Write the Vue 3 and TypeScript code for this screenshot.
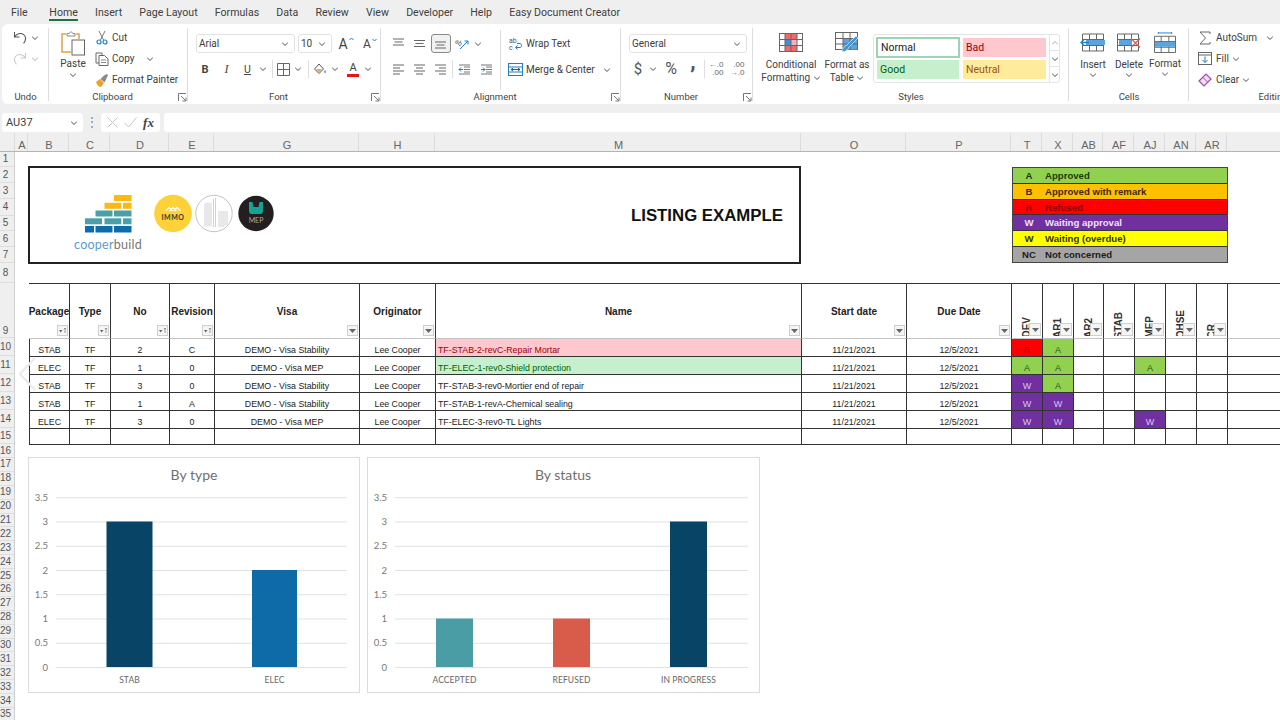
<script setup lang="ts">
interface Row { p: string; n: number; r: string; v: string; name: string; cls: string; s: string[] }

const tabs: string[] = ['Home', 'Insert', 'Page Layout', 'Formulas', 'Data', 'Review', 'View', 'Developer', 'Help', 'Easy Document Creator']
const columns: string[] = ['', 'A', 'B', 'C', 'D', 'E', 'G', 'H', 'M', 'O', 'P', 'T', 'X', 'AB', 'AF', 'AJ', 'AN', 'AR', '']

const rowHeads: { n: number; h: number }[] = [
  { n: 1, h: 15 }, { n: 2, h: 16 }, { n: 3, h: 16 }, { n: 4, h: 17 }, { n: 5, h: 15 }, { n: 6, h: 16 }, { n: 7, h: 16 }, { n: 8, h: 20 }, { n: 9, h: 55 },
  { n: 10, h: 18 }, { n: 11, h: 18 }, { n: 12, h: 18 }, { n: 13, h: 18 }, { n: 14, h: 18 }, { n: 15, h: 16 }, { n: 16, h: 14 },
  ...Array.from({ length: 19 }, (_, i) => ({ n: 17 + i, h: 13.9 }))
]

const legend = [
  { k: 'A', t: 'Approved', c: 'lg-a' },
  { k: 'B', t: 'Approved with remark', c: 'lg-b' },
  { k: 'R', t: 'Refused', c: 'lg-r' },
  { k: 'W', t: 'Waiting approval', c: 'lg-w' },
  { k: 'W', t: 'Waiting (overdue)', c: 'lg-y' },
  { k: 'NC', t: 'Not concerned', c: 'lg-n' }
]

const heads = [
  { t: 'Package', sort: true }, { t: 'Type', sort: true }, { t: 'No', sort: true }, { t: 'Revision', sort: true },
  { t: 'Visa', sort: false }, { t: 'Originator', sort: false }, { t: 'Name', sort: false }, { t: 'Start date', sort: false }, { t: 'Due Date', sort: false }
]
const statusHeads: string[] = ['DEV', 'AR1', 'AR2', 'STAB', 'MEP', 'OHSE', 'CR']

const rows: Row[] = [
  { p: 'STAB', n: 2, r: 'C', v: 'DEMO - Visa Stability', name: 'TF-STAB-2-revC-Repair Mortar', cls: 'bad', s: ['R', 'A', '', '', '', '', ''] },
  { p: 'ELEC', n: 1, r: '0', v: 'DEMO - Visa MEP', name: 'TF-ELEC-1-rev0-Shield protection', cls: 'good', s: ['A', 'A', '', '', 'A', '', ''] },
  { p: 'STAB', n: 3, r: '0', v: 'DEMO - Visa Stability', name: 'TF-STAB-3-rev0-Mortier end of repair', cls: '', s: ['W', 'A', '', '', '', '', ''] },
  { p: 'STAB', n: 1, r: 'A', v: 'DEMO - Visa Stability', name: 'TF-STAB-1-revA-Chemical sealing', cls: '', s: ['W', 'W', '', '', '', '', ''] },
  { p: 'ELEC', n: 3, r: '0', v: 'DEMO - Visa MEP', name: 'TF-ELEC-3-rev0-TL Lights', cls: '', s: ['W', 'W', '', '', 'W', '', ''] }
]

const ticks: number[] = [3.5, 3, 2.5, 2, 1.5, 1, 0.5, 0]
const yOf = (v: number): number => 209 - v * 48.5
const charts = [
  { title: 'By type', w: 330, h: 234, right: 319, tx: 166, bars: [
    { l: 'STAB', v: 3, x: 78.5, w: 46, c: '#084466' },
    { l: 'ELEC', v: 2, x: 224, w: 45, c: '#0e6ba8' }
  ] },
  { title: 'By status', w: 391, h: 234, right: 381, tx: 196, bars: [
    { l: 'ACCEPTED', v: 1, x: 69, w: 37, c: '#4a9da5' },
    { l: 'REFUSED', v: 1, x: 186, w: 37, c: '#d95c4b' },
    { l: 'IN PROGRESS', v: 3, x: 303, w: 37, c: '#084466' }
  ] }
]
</script>

<template>
  <div class="app">
    <svg class="defs" width="0" height="0" aria-hidden="true">
      <symbol id="chev" viewBox="0 0 8 8"><path d="M1.2 2.8 4 5.4l2.8-2.6" fill="none" stroke="#555" stroke-width="1" /></symbol>
      <symbol id="launch" viewBox="0 0 9 9"><path d="M.5 8V.5H8M3 3l4.5 4.5M4.5 8H8V4.5" fill="none" stroke="#666" stroke-width=".9" /></symbol>
    </svg>

    <nav class="tabs">
      <span class="tab file">File</span>
      <span v-for="t in tabs" :key="t" class="tab" :class="{ active: t === 'Home' }">{{ t }}</span>
    </nav>

    <section class="ribbon">
      <!-- Undo -->
      <div class="grp g-undo">
        <div class="body stack3">
          <div class="undo-row">
            <svg width="16" height="16" viewBox="0 0 16 16"><path d="M2.5 2v5h5M2.8 6.8C4.5 3.6 8.6 2.6 11.4 4.4c2.8 1.9 3 5.6.2 9" fill="none" stroke="#555" stroke-width="1.1" /></svg>
            <svg class="chev"><use href="#chev" /></svg>
          </div>
          <div class="undo-row faded">
            <svg width="16" height="16" viewBox="0 0 16 16"><path d="M13.5 2v5h-5M13.2 6.8C11.5 3.6 7.4 2.6 4.6 4.4c-2.8 1.9-3 5.6-.2 9" fill="none" stroke="#888" stroke-width="1.1" /></svg>
            <svg class="chev"><use href="#chev" /></svg>
          </div>
        </div>
        <div class="label">Undo</div>
      </div>

      <!-- Clipboard -->
      <div class="grp g-clip">
        <div class="body clip-body">
          <div class="paste">
            <svg width="26" height="27" viewBox="0 0 26 27">
              <path d="M6 4H2v18h9" fill="#fff" stroke="#e2a04a" stroke-width="1.5" />
              <path d="M16 4h3v5" fill="none" stroke="#e2a04a" stroke-width="1.5" />
              <path d="M7 6V3.5h2.2C9.5 1.5 12.5 1.500 12.800 3.500H15V6z" fill="#fff" stroke="#888" />
              <rect x="12" y="10" width="12.500" height="15" fill="#fff" stroke="#666" />
            </svg>
            <span class="t paste-t">Paste</span>
            <svg class="chev"><use href="#chev" /></svg>
          </div>
          <div class="stack3 clip-list">
            <div class="clip-row">
              <svg width="13" height="15" viewBox="0 0 13 15"><path d="M3.500 1 8 10M9.500 1 5 10" stroke="#777" fill="none" /><circle cx="3.500" cy="12" r="2" fill="none" stroke="#1f7fc9" stroke-width="1.200" /><circle cx="9.500" cy="12" r="2" fill="none" stroke="#1f7fc9" stroke-width="1.200" /></svg>
              <span class="t">Cut</span>
            </div>
            <div class="clip-row">
              <svg width="14" height="14" viewBox="0 0 14 14"><path d="M4 11H1V1h6v2" fill="none" stroke="#666" /><path d="M4 3.500h5.500L13 7v6.500H4z" fill="#fff" stroke="#666" /><path d="M6 8h5M6 10.500h5" stroke="#888" /></svg>
              <span class="t">Copy</span>
              <svg class="chev copy-chev"><use href="#chev" /></svg>
            </div>
            <div class="clip-row">
              <svg width="14" height="14" viewBox="0 0 14 14"><path d="M1 9l4-3 4 4-3 4c-2 0-4-2-5-5z" fill="#eca22e" /><path d="M5.500 6 9 2.500 12 1l1 1-1.500 3.500L9.500 9.500z" fill="#8a8a8a" /></svg>
              <span class="t">Format Painter</span>
            </div>
          </div>
        </div>
        <div class="label">Clipboard</div>
        <svg class="launcher"><use href="#launch" /></svg>
      </div>

      <!-- Font -->
      <div class="grp g-font">
        <div class="body two-row">
          <div class="font-r1">
            <div class="select"><span>Arial</span><svg class="chev"><use href="#chev" /></svg></div>
            <div class="select"><span>10</span><svg class="chev"><use href="#chev" /></svg></div>
            <span class="grow-a big">A<svg width="5" height="4" viewBox="0 0 5 4"><path d="M.5 3 2.500 1l2 2" fill="none" stroke="#1f7fc9" /></svg></span>
            <span class="grow-a small">A<svg width="5" height="4" viewBox="0 0 5 4"><path d="M.5 1l2 2 2-2" fill="none" stroke="#1f7fc9" /></svg></span>
          </div>
          <div class="font-r2">
            <span class="fmt bold">B</span>
            <span class="fmt ital">I</span>
            <span class="fmt under">U</span>
            <svg class="chev"><use href="#chev" /></svg>
            <i class="vsep"></i>
            <svg width="13" height="13" viewBox="0 0 13 13"><path d="M.5.500h12v12H.500zM6.500.500v12M.5 6.500h12" fill="none" stroke="#666" /></svg>
            <svg class="chev"><use href="#chev" /></svg>
            <i class="vsep"></i>
            <svg width="14" height="13" viewBox="0 0 14 13"><path d="M6 1 1.500 6 6 10.500 10.500 6z" fill="none" stroke="#555" /><path d="M3 6h6L6 9.500z" fill="#e9a94a" /><path d="M12 7c1 1.500 1 3 0 3s-1-1.500 0-3z" fill="#2c7fc4" /></svg>
            <svg class="chev"><use href="#chev" /></svg>
            <span class="color-a">A</span>
            <svg class="chev"><use href="#chev" /></svg>
          </div>
        </div>
        <div class="label">Font</div>
        <svg class="launcher"><use href="#launch" /></svg>
      </div>

      <!-- Alignment -->
      <div class="grp g-align">
        <div class="body align-body">
          <div class="two-row align-left">
            <div class="al-r1">
              <svg class="al" viewBox="0 0 13 13"><path d="M1 2h11M2.500 5h8M1 8h11" /></svg>
              <svg class="al" viewBox="0 0 13 13"><path d="M1 3.500h11M2.500 6.500h8M1 9.500h11" /></svg>
              <span class="al-on"><svg class="al" viewBox="0 0 13 13"><path d="M1 5h11M2.500 8h8M1 11h11" /></svg></span>
              <svg class="orient" width="15" height="14" viewBox="0 0 15 14"><text x="0" y="8" font-size="6.500" fill="#555" font-family="Roboto" transform="rotate(35 4 6)">ab</text><path d="M5 12 13 4M9.500 4H13v3.500" fill="none" stroke="#1f7fc9" /></svg>
              <svg class="chev"><use href="#chev" /></svg>
            </div>
            <div class="al-r2">
              <svg class="al" viewBox="0 0 13 13"><path d="M1 2h11M1 5h7M1 8h11M1 11h7" /></svg>
              <svg class="al" viewBox="0 0 13 13"><path d="M1 2h11M3 5h7M1 8h11M3 11h7" /></svg>
              <svg class="al" viewBox="0 0 13 13"><path d="M1 2h11M5 5h7M1 8h11M5 11h7" /></svg>
              <i class="vsep"></i>
              <svg width="13" height="13" viewBox="0 0 13 13"><path d="M6 4h6M6 6.500h6M6 9h6M1 2h11M1 11h11" stroke="#777" fill="none" /><path d="M5 6.500H1M3 4.500l-2 2 2 2" stroke="#1f7fc9" fill="none" /></svg>
              <svg width="13" height="13" viewBox="0 0 13 13"><path d="M6 4h6M6 6.500h6M6 9h6M1 2h11M1 11h11" stroke="#777" fill="none" /><path d="M1 6.500h4M3 4.500l2 2-2 2" stroke="#1f7fc9" fill="none" /></svg>
            </div>
          </div>
          <div class="two-row align-right">
            <div class="wrap-row">
              <svg width="15" height="15" viewBox="0 0 15 15"><text x="1" y="6.500" font-size="7" fill="#555" font-family="Roboto">ab</text><text x="1" y="14" font-size="7" fill="#555" font-family="Roboto">c</text><path d="M8 11.500h4c2 0 2-4 0-4H9M9.500 9.500l-2 2 2 2" fill="none" stroke="#1f7fc9" /></svg>
              <span class="t">Wrap Text</span>
            </div>
            <div class="wrap-row merge">
              <svg width="15" height="13" viewBox="0 0 15 13"><rect x=".5" y=".5" width="14" height="12" fill="#fff" stroke="#1f7fc9" /><path d="M.5 4h14M.5 9h14" stroke="#1f7fc9" /><path d="M3 6.500h9M5 5 3 6.500 5 8M10 5l2 1.500L10 8" fill="none" stroke="#1c5f96" /></svg>
              <span class="t">Merge &amp; Center</span>
              <svg class="chev merge-chev"><use href="#chev" /></svg>
            </div>
          </div>
        </div>
        <div class="label">Alignment</div>
        <svg class="launcher"><use href="#launch" /></svg>
      </div>

      <!-- Number -->
      <div class="grp g-num">
        <div class="body two-row">
          <div class="select num-select"><span>General</span><svg class="chev"><use href="#chev" /></svg></div>
          <div class="num-r2">
            <span class="sym">$</span>
            <svg class="chev"><use href="#chev" /></svg>
            <span class="sym pct">%</span>
            <span class="sym comma">,</span>
            <i class="vsep"></i>
            <span class="dec"><b>←</b>.0<br />.00</span>
            <span class="dec">.00<br /><b>→</b>.0</span>
          </div>
        </div>
        <div class="label">Number</div>
        <svg class="launcher"><use href="#launch" /></svg>
      </div>

      <!-- Styles -->
      <div class="grp g-styles">
        <div class="body styles-body">
          <div class="bigbtn">
            <svg width="24" height="19" viewBox="0 0 24 19"><rect x=".5" y=".5" width="23" height="18" fill="#fff" stroke="#666" /><rect x="6" y="1" width="12" height="5" fill="#ee6a6f" /><rect x="6" y="7" width="6" height="5" fill="#3d8fd6" /><rect x="12" y="7" width="6" height="5" fill="#f4b4b6" /><rect x="6" y="13" width="12" height="5" fill="#ee6a6f" /><path d="M6 .5v18M12 .5v18M18 .5v18M.5 6.500h23M.5 12.500h23" stroke="#666" fill="none" /></svg>
            <span class="t bt">Conditional<br />Formatting <svg class="chev inl"><use href="#chev" /></svg></span>
          </div>
          <div class="bigbtn">
            <svg width="24" height="21" viewBox="0 0 24 21"><rect x=".5" y=".5" width="22" height="17" fill="#fff" stroke="#666" /><rect x="8" y="6.500" width="14" height="11" fill="#5aa4e0" /><path d="M8 .5v17M15 .5v17M.5 6.500h22M.5 12h22" stroke="#666" fill="none" /><path d="M7 20c0-4 3-6 5-7l9-9 2 2-9 9c-1 2-3 5-7 5z" fill="#3f94d6" stroke="#fff" stroke-width=".6" /></svg>
            <span class="t bt">Format as<br />Table <svg class="chev inl"><use href="#chev" /></svg></span>
          </div>
          <div class="gallery">
            <div class="cells">
              <span class="sty normal">Normal</span>
              <span class="sty s-bad">Bad</span>
              <span class="sty s-good">Good</span>
              <span class="sty s-neutral">Neutral</span>
            </div>
            <div class="scroll">
              <span><svg class="chev up"><use href="#chev" /></svg></span>
              <span><svg class="chev"><use href="#chev" /></svg></span>
              <span><svg class="chev"><use href="#chev" /></svg></span>
            </div>
          </div>
        </div>
        <div class="label">Styles</div>
      </div>

      <!-- Cells -->
      <div class="grp g-cells">
        <div class="body cells-body">
          <div class="bigbtn cellbtn">
            <svg width="26" height="20" viewBox="0 0 26 20"><path d="M2.500 1.500h21v17h-21zM2.500 7h21M2.500 13h21M9.500 1.500v17M16.500 1.500v17" fill="none" stroke="#666" /><rect x="6" y="7.500" width="19" height="5" fill="#5aa4e0" /><path d="M9 10H1M4 7 1 10l3 3" fill="none" stroke="#1f7fc9" stroke-width="1.300" /></svg>
            <span class="t">Insert</span>
            <svg class="chev"><use href="#chev" /></svg>
          </div>
          <div class="bigbtn cellbtn">
            <svg width="26" height="20" viewBox="0 0 26 20"><path d="M1.500 1.500h21v17h-21zM1.500 7h21M1.500 13h21M8.500 1.500v17M15.500 1.500v17" fill="none" stroke="#666" /><rect x="3" y="7.500" width="13" height="5" fill="#5aa4e0" /><path d="M15 6l9 9M24 6l-9 9" stroke="#e25b50" stroke-width="1.200" /></svg>
            <span class="t">Delete</span>
            <svg class="chev"><use href="#chev" /></svg>
          </div>
          <div class="bigbtn cellbtn">
            <svg width="24" height="22" viewBox="0 0 24 22"><path d="M5 1h14M5 0v2M19 0v2" stroke="#1f7fc9" fill="none" /><path d="M1 4.500h22v17H1zM1 10h22M1 16h22M8 4.500v17M16 4.500v17" fill="none" stroke="#666" /><rect x="1.500" y="10.500" width="21" height="5" fill="#5aa4e0" /></svg>
            <span class="t fmt-t">Format</span>
            <svg class="chev"><use href="#chev" /></svg>
          </div>
        </div>
        <div class="label">Cells</div>
      </div>

      <!-- Editing -->
      <div class="grp g-edit">
        <div class="body stack3 edit-list">
          <div class="edit-row">
            <svg width="13" height="14" viewBox="0 0 13 14"><path d="M11.500 3V1H1.500L7 7l-5.500 6h10v-2" fill="none" stroke="#666" /></svg>
            <span class="t">AutoSum</span>
            <svg class="chev sum-chev"><use href="#chev" /></svg>
          </div>
          <div class="edit-row">
            <svg width="14" height="13" viewBox="0 0 14 13"><rect x=".5" y=".5" width="13" height="12" fill="#fff" stroke="#666" /><path d="M.5 3h13" stroke="#666" /><path d="M7 4.500v6M4.500 8 7 10.500 9.500 8" fill="none" stroke="#1f7fc9" /></svg>
            <span class="t">Fill</span>
            <svg class="chev"><use href="#chev" /></svg>
          </div>
          <div class="edit-row">
            <svg width="14" height="14" viewBox="0 0 14 14"><path d="M1 8 8 1l5 5-7 7z" fill="#f0dff2" stroke="#a24ab0" stroke-width="1.200" /><path d="M5 4.500l4.500 4.500" stroke="#a24ab0" /></svg>
            <span class="t">Clear</span>
            <svg class="chev"><use href="#chev" /></svg>
          </div>
        </div>
        <div class="label">Editing</div>
      </div>
    </section>

    <section class="fbar">
      <div class="namebox"><span>AU37</span><svg class="chev"><use href="#chev" /></svg></div>
      <span class="dots">⋮</span>
      <div class="fbtns">
        <svg width="11" height="11" viewBox="0 0 11 11"><path d="M.5.500l10 10M10.500.500l-10 10" stroke="#c4c4c4" /></svg>
        <svg width="13" height="11" viewBox="0 0 13 11"><path d="M.5 6l4 4 8-9.500" stroke="#c4c4c4" fill="none" /></svg>
        <span class="fx">fx</span>
      </div>
      <div class="finput"></div>
    </section>

    <header class="colhead">
      <span v-for="(c, i) in columns" :key="i" class="ch" :class="{ corner: i === 0 }">{{ c }}</span>
    </header>

    <main class="sheet">
      <aside class="rowheads">
        <span v-for="r in rowHeads" :key="r.n" class="rh" :class="{ low: r.n === 9 }" :style="{ height: r.h + 'px' }">{{ r.n }}</span>
      </aside>

      <div class="content">
        <div class="top">
          <div class="titlebox">
            <div class="logos">
              <div class="cooper">
                <svg width="47" height="38" viewBox="0 0 47 38">
                  <g fill="#fdb813"><rect x="29" y="0" width="17.500" height="6" /><rect x="19.500" y="7.800" width="16.800" height="6" /><rect x="38" y="7.800" width="8.500" height="6" /></g>
                  <g fill="#4a9fa8"><rect x="10.500" y="15.500" width="17" height="6" /><rect x="29" y="15.500" width="17.500" height="6" /><rect x="0" y="23.300" width="17" height="6" /><rect x="19.500" y="23.300" width="16.800" height="6" /><rect x="38" y="23.300" width="8.500" height="6" /></g>
                  <g fill="#0f6cab"><rect x="0" y="31" width="9" height="6.500" /><rect x="10.500" y="31" width="17" height="6.500" /><rect x="29" y="31" width="17.500" height="6.500" /></g>
                </svg>
                <span class="wordmark"><span class="wm-a">cooper</span><span class="wm-b">build</span></span>
              </div>
              <svg class="badge-immo" width="38" height="39" viewBox="0 0 38 39">
                <circle cx="19" cy="19.500" r="18.800" fill="#fdd138" />
                <path d="M11.500 17l3.500-3.500 3.500 3.500M15.500 17l3.500-3.500 3.500 3.500M19.500 17l3.500-3.500 3.500 3.500" fill="none" stroke="#fff" stroke-width="1.100" />
                <text x="19" y="26" text-anchor="middle" font-size="7" font-weight="700" letter-spacing=".5" fill="#3a3a2a" font-family="Lato">IMMO</text>
              </svg>
              <svg class="badge-arch" width="38" height="39" viewBox="0 0 38 39">
                <circle cx="19" cy="19.500" r="18.200" fill="#fff" stroke="#c4c4c4" />
                <path d="M10 9.500v23M12 8.500v24M14 8.500v24M16 9v23M18.500 5v28M20.500 4v29M24 17v16M26 17v16M28 17v16M30 17v15M32 17v14" stroke="#d2d2d2" fill="none" />
              </svg>
              <svg class="badge-mep" width="36" height="37" viewBox="0 0 36 37">
                <circle cx="18" cy="18.500" r="17.700" fill="#231f20" />
                <path d="M11 7h3.500l1 5h5l1-5H25v9c0 1.500-1 3-2.500 3h-9C12 19 11 17.500 11 16z" fill="#16a394" />
                <text x="18" y="28" text-anchor="middle" font-size="7" fill="#a8a8a8" font-family="Lato">MEP</text>
              </svg>
            </div>
            <h1 class="title">LISTING EXAMPLE</h1>
          </div>
          <div class="legend">
            <div v-for="l in legend" :key="l.t" class="lg" :class="l.c"><b class="lk">{{ l.k }}</b><b>{{ l.t }}</b></div>
          </div>
        </div>

        <div class="table">
          <div v-for="h in heads" :key="h.t" class="c hd">
            <span>{{ h.t }}</span>
            <span class="fb">
              <svg v-if="h.sort" width="9" height="7" viewBox="0 0 9 7"><path d="M1 3h3.500L2.700 5.500z" fill="#666" /><path d="M7 6V1M5.800 2.200 7 1l1.200 1.200" stroke="#777" fill="none" stroke-width=".7" /></svg>
              <svg v-else width="7" height="4" viewBox="0 0 7 4"><path d="M0 0h7L3.500 4z" fill="#666" /></svg>
            </span>
          </div>
          <div v-for="h in statusHeads" :key="h" class="c hd rot-cell">
            <span class="rot-wrap"><span class="rot">{{ h }}</span></span>
            <span class="fb"><svg width="7" height="4" viewBox="0 0 7 4"><path d="M0 0h7L3.500 4z" fill="#666" /></svg></span>
          </div>
          <div class="c hd last"></div>

          <template v-for="r in rows" :key="r.name">
            <div class="c">{{ r.p }}</div>
            <div class="c">TF</div>
            <div class="c">{{ r.n }}</div>
            <div class="c">{{ r.r }}</div>
            <div class="c">{{ r.v }}</div>
            <div class="c">Lee Cooper</div>
            <div class="c nm" :class="r.cls">{{ r.name }}</div>
            <div class="c">11/21/2021</div>
            <div class="c">12/5/2021</div>
            <div v-for="(s, i) in r.s" :key="i" class="c st" :class="'st-' + s">{{ s }}</div>
            <div class="c last"></div>
          </template>

          <div v-for="i in 16" :key="'e' + i" class="c"></div>
          <div class="c last"></div>
        </div>

        <div class="charts">
          <div v-for="ch in charts" :key="ch.title" class="chart">
            <svg :width="ch.w" :height="ch.h" :viewBox="`1 0 ${ch.w} ${ch.h}`">
              <text :x="ch.tx" y="22" text-anchor="middle" class="ct">{{ ch.title }}</text>
              <g v-for="t in ticks" :key="t">
                <line x1="28" :x2="ch.right" :y1="yOf(t) + 0.5" :y2="yOf(t) + 0.5" stroke="#e1e1e1" />
                <text x="20" :y="yOf(t) + 3.500" text-anchor="end" class="cy">{{ t }}</text>
              </g>
              <g v-for="b in ch.bars" :key="b.l">
                <rect :x="b.x" :y="yOf(b.v)" :width="b.w" :height="209 - yOf(b.v)" :fill="b.c" />
                <text :x="b.x + b.w / 2" y="225" text-anchor="middle" class="cx">{{ b.l }}</text>
              </g>
            </svg>
          </div>
        </div>
      </div>
    </main>

    <svg class="ghost" width="20" height="36" viewBox="0 0 20 36"><path d="M18 2 3 18l15 16" fill="none" stroke="#ececec" stroke-width="2.500" /></svg>
  </div>
</template>

<style>
html, body { margin: 0; background: #fff; overflow: hidden; }
</style>

<style scoped>
.app { position: relative; width: 1280px; height: 720px; overflow: hidden; background: #fff; font-family: Roboto, "Noto Sans", sans-serif; color: #404040; }
.defs { position: absolute; }
.chev { width: 8px; height: 8px; flex: none; }
.chev.inl { vertical-align: -1px; }
.chev.up { transform: rotate(180deg); opacity: .45; }

.tabs { height: 24px; background: #efefef; display: flex; align-items: center; padding: 1px 0 0 11px; gap: 17.200px; font-size: 10.600px; box-sizing: border-box; }
.tab { position: relative; line-height: 23px; white-space: nowrap; }
.file { margin-right: 4.500px; }
.active::after { content: ""; position: absolute; left: 0; right: 0; bottom: 3px; height: 2px; background: #217346; }

.ribbon { height: 81px; background: #efefef; padding-left: 2px; display: flex; overflow: hidden; box-sizing: border-box; }
.grp { position: relative; flex: none; height: 80px; background: #fff; display: flex; flex-direction: column; box-sizing: border-box; }
.grp::after { content: ""; position: absolute; right: 0; top: 4px; bottom: 3px; width: 1px; background: #dedede; }
.g-undo { width: 47px; border-radius: 6px 0 0 6px; }
.g-clip { width: 139px; }
.g-font { width: 193px; padding-left: 8px; }
.g-align { width: 240px; padding-left: 7px; }
.g-num { width: 132px; padding-left: 8px; }
.g-styles { width: 316px; padding-left: 10px; }
.g-cells { width: 120px; padding-left: 6px; }
.g-edit { width: 168px; }
.g-edit::after { display: none; }
.body { flex: 1; min-height: 0; }
.label { height: 14px; line-height: 13px; text-align: center; font-size: 9.500px; color: #444; }
.g-clip .label { padding-right: 12px; }
.g-font .label { padding-right: 20px; }
.g-align .label { padding-right: 19px; }
.g-num .label { padding-right: 20px; }
.g-styles .label { padding-right: 10px; }
.g-cells .label { padding-right: 6px; }
.launcher { position: absolute; right: 1.500px; bottom: 2px; width: 9px; height: 9px; }
.t { font-size: 10px; white-space: nowrap; color: #404040; }

.stack3 { display: flex; flex-direction: column; padding-top: 3px; }
.stack3 > * { height: 21px; display: flex; align-items: center; }
.undo-row { padding-left: 10px; gap: 3px; }
.faded { opacity: .45; }

.clip-body { display: flex; }
.paste { width: 52px; margin-left: -2px; padding-top: 6px; display: flex; flex-direction: column; align-items: center; }
.paste-t { margin-top: 1px; }
.paste .chev { margin-top: 2px; }
.clip-list { margin-left: -5px; }
.clip-row { gap: 3px; margin-left: 1px; }
.clip-row > svg:first-child { width: 14px; }
.copy-chev { margin-left: 8px; }

.two-row { display: flex; flex-direction: column; padding-top: 10px; box-sizing: border-box; }
.select { height: 19px; border: 1px solid #e2e2e2; border-radius: 3px; box-sizing: border-box; display: flex; align-items: center; justify-content: space-between; padding: 0 5px 0 2px; font-size: 10px; }
.font-r1 { display: grid; grid-template-columns: 99px 34px 23px 21px; column-gap: 3px; align-items: center; }
.grow-a { display: flex; justify-content: center; align-items: flex-start; color: #444; line-height: 1; }
.big { font-size: 14px; margin-left: -1px; }
.small { font-size: 12px; margin-left: -3px; }
.grow-a svg { margin-left: 1px; }
.font-r2 { margin: 7px 0 0 -2px; height: 18px; display: grid; grid-template-columns: 22px 21px 21px 10px 8px 14px 16px 4px 20px 10px 26px 4px; place-items: center; }
.fmt { font-family: "Liberation Serif", serif; font-size: 12px; color: #444; }
.bold { font-family: Roboto, sans-serif; font-weight: 700; font-size: 11px; }
.ital { font-style: italic; }
.under { font-family: Roboto, sans-serif; font-size: 10.500px; text-decoration: underline; }
.color-a { font-size: 11px; line-height: 11px; padding: 0 2px 1px; border-bottom: 3px solid #e8141c; color: #444; }
.vsep { display: block; width: 1px; height: 18px; background: #dedede; }

.align-body { display: flex; }
.align-left { width: 112px; }
.al { width: 13px; height: 13px; fill: none; stroke: #666; stroke-width: 1; }
.al-r1 { height: 19px; display: grid; grid-template-columns: 21px 21px 21px 23px 8px; place-items: center; }
.al-on { width: 20px; height: 19px; border: 1px solid #8a8a8a; border-radius: 3px; background: #f1f1f1; box-sizing: border-box; display: flex; align-items: center; justify-content: center; }
.orient { overflow: visible; }
.al-r2 { margin-top: 7px; height: 18px; display: grid; grid-template-columns: 21px 21px 21px 2px 22px 22px; place-items: center; }
.align-right { border-left: 1px solid #dedede; height: 60px; margin-top: 6px; padding: 4px 0 0 3px; width: 115px; box-sizing: border-box; }
.wrap-row { height: 19px; display: flex; align-items: center; gap: 3px; padding-left: 4px; }
.merge { margin-top: 7px; }
.merge-chev { margin-left: 5px; }

.num-select { width: 118px; }
.num-r2 { margin-top: 7px; height: 18px; width: 118px; display: grid; grid-template-columns: 18px 12px 24px 20px 2px 22px 20px; place-items: center; }
.sym { font-size: 15px; line-height: 18px; color: #555; }
.pct { font-size: 16px; }
.comma { font-weight: 900; font-size: 20px; transform: translateY(-7px); }
.dec { font-size: 8px; line-height: 8px; color: #666; text-align: right; font-family: "Liberation Sans", sans-serif; }
.dec b { color: #1f7fc9; font-weight: 400; }

.styles-body { display: flex; }
.bigbtn { width: 56px; height: 66px; padding-top: 8px; box-sizing: border-box; display: flex; flex-direction: column; align-items: center; }
.bigbtn svg:first-child { height: 21px; flex: none; }
.bt { margin-top: 5px; line-height: 13px; text-align: center; }
.gallery { margin: 10px 0 0 -2px; width: 187px; height: 49px; border: 1px solid #e4e4e4; border-radius: 3px; box-sizing: border-box; display: flex; }
.cells { width: 175px; padding: 2px 0 0 2px; box-sizing: border-box; display: grid; grid-template-columns: 84px 83px; grid-template-rows: 21px 19px; column-gap: 3px; row-gap: 2px; }
.sty { font-size: 10.500px; display: flex; align-items: center; padding-left: 3px; box-sizing: border-box; }
.normal { border: 2px solid #9fd3b5; color: #222; }
.s-bad { background: #ffc7ce; color: #9c0006; margin: 1px 0 1px; }
.s-good { background: #c6efce; color: #006100; margin-left: 1px; margin-right: 1px; }
.s-neutral { background: #ffeb9c; color: #9c5700; }
.scroll { flex: 1; display: flex; flex-direction: column; border-left: 1px solid #e4e4e4; }
.scroll span { flex: 1; display: flex; align-items: center; justify-content: center; border-bottom: 1px solid #e4e4e4; }
.scroll span:last-child { border-bottom: 0; }

.cells-body { display: flex; }
.cellbtn { width: 36px; }
.cellbtn .t { margin-top: 5px; line-height: 14px; }
.cellbtn .chev { margin-top: -1px; }
.cellbtn .fmt-t { margin-top: 4px; }

.edit-list { padding-left: 8px; }
.edit-row { gap: 3px; }
.edit-row > svg:first-child { width: 16px; }
.sum-chev { margin-left: 6px; }

.fbar { height: 28px; background: #efefef; display: flex; align-items: flex-start; padding: 8px 0 0 2px; box-sizing: border-box; }
.namebox { width: 81px; height: 19px; background: #fff; border-radius: 3px; box-sizing: border-box; padding: 0 5px 0 4px; display: flex; align-items: center; justify-content: space-between; font-size: 11px; }
.dots { width: 18px; text-align: center; font-size: 12px; line-height: 19px; color: #888; }
.fbtns { width: 59px; height: 19px; background: #fff; border-radius: 3px; display: flex; align-items: center; justify-content: space-evenly; }
.fx { font-family: "Liberation Serif", serif; font-style: italic; font-weight: 700; font-size: 13px; color: #444; }
.finput { flex: 1; height: 19px; margin-left: 4px; background: #fff; border-radius: 3px 0 0 3px; }

.colhead { height: 19px; background: #efefef; border-bottom: 1px solid #b4b4b4; box-sizing: border-box; display: grid; grid-template-columns: 15px 13px 41px 41px 59px 45px 145px 76px 366px 105px 105px 31px 31px 30px 31px 31px 31px 31px 1fr; font-family: "Liberation Sans", sans-serif; font-size: 11px; color: #666; }
.ch { text-align: center; line-height: 24px; height: 18px; border-right: 1px solid #dcdcdc; box-sizing: border-box; padding-left: 2px; overflow: hidden; }
.ch:last-child { border-right: 0; }

.sheet { display: flex; }
.rowheads { width: 15px; flex: none; background: #efefef; border-right: 1px solid #cfcfcf; box-sizing: border-box; display: flex; flex-direction: column; }
.rh { flex: none; box-sizing: border-box; border-bottom: 1px solid #dedede; display: flex; align-items: center; justify-content: center; padding-right: 3px; font-family: "Liberation Sans", sans-serif; font-size: 10px; color: #555; line-height: 1; }
.low { align-items: flex-end; padding-bottom: 1px; }
.content { flex: 1; min-width: 0; }

.top { height: 131px; box-sizing: border-box; padding: 14px 0 0 13px; display: flex; align-items: flex-start; }
.titlebox { width: 773px; height: 98px; box-sizing: border-box; border: 2px solid #222; display: flex; align-items: center; justify-content: space-between; padding: 0 16px 0 44px; }
.logos { display: flex; align-items: flex-start; height: 60px; padding-top: 6px; box-sizing: border-box; }
.cooper { display: flex; flex-direction: column; align-items: center; width: 68px; margin-top: 4px; }
.cooper svg { margin-left: 1px; }
.wordmark { font-family: Lato, sans-serif; font-size: 12.500px; line-height: 13px; margin-top: 5px; letter-spacing: .25px; }
.wm-a { color: #5a9bc9; }
.wm-b { color: #777; }
.badge-immo { margin: 3px 0 0 11.500px; }
.badge-arch { margin: 3px 0 0 3px; }
.badge-mep { margin: 4px 0 0 5px; }
.title { margin: 1px 0 0; font-family: "Liberation Sans", sans-serif; font-weight: 700; font-size: 16.800px; color: #111; white-space: nowrap; }

.legend { width: 216px; height: 96px; margin: 1px 0 0 211px; box-sizing: border-box; border: 1px solid #444; display: flex; flex-direction: column; font-family: "Liberation Sans", sans-serif; font-size: 9.600px; }
.lg { flex: 1; display: flex; align-items: center; border-bottom: 1px solid #333; color: #222; box-sizing: border-box; }
.lg:last-child { border-bottom: 0; }
.lk { width: 32px; text-align: center; }
.lg-a { background: #92d050; color: #1c3a0c; }
.lg-b { background: #ffc000; color: #3a2a00; }
.lg-r { background: #ff0000; color: #8b0000; }
.lg-w { background: #7030a0; color: #eee2f7; }
.lg-y { background: #ffff00; color: #333300; }
.lg-n { background: #a5a5a5; color: #1d1d1d; }

.table { display: grid; margin-left: 14px; grid-template-columns: 41px 41px 59px 45px 145px 76px 366px 105px 105px 31px 31px 30px 31px 31px 31px 31px 1fr; grid-template-rows: 56px repeat(5, 18px) 16px; font-family: "Liberation Sans", sans-serif; font-size: 8.800px; color: #222; box-sizing: border-box; }
.c { box-sizing: border-box; border-right: 1px solid #333; border-bottom: 1px solid #333; display: flex; align-items: flex-end; justify-content: center; white-space: nowrap; min-width: 0; line-height: 11px; }
.c:nth-child(17n + 1) { border-left: 1px solid #333; }
.last { border-right: 0; }
.hd { position: relative; border-top: 1.500px solid #333; border-left: 0 !important; border-bottom-color: #c4c4c4; align-items: flex-start; padding: 22px 0 0; font-weight: 700; font-size: 10px; overflow: visible; }
.hd.last { padding: 0; }
.fb { position: absolute; right: 1px; bottom: 2px; width: 11px; height: 11px; background: #f5f5f5; border: 1px solid #cfcfcf; box-sizing: border-box; display: flex; align-items: center; justify-content: center; }
.rot-cell { padding: 0; color: #333; }
.rot-wrap { position: absolute; left: 0; right: 0; top: 0; bottom: 2px; display: flex; align-items: flex-end; justify-content: center; overflow: hidden; }
.rot { writing-mode: vertical-rl; transform: rotate(180deg); margin-bottom: -2px; line-height: 1; }
.rot-cell .fb { width: 12px; height: 13px; }
.nm { justify-content: flex-start; padding-left: 2px; }
.bad { background: #ffc7ce; color: #9c0006; }
.good { background: #c6efce; color: #006100; }
.st { font-size: 9px; }
.st-A { background: #92d050; color: #245a1a; }
.st-R { background: #ff0000; color: #9a0000; }
.st-W { background: #7030a0; color: #dcc6ee; }

.charts { display: flex; gap: 7px; margin: 12px 0 0 13px; }
.chart { border: 1px solid #dcdcdc; flex: none; display: flex; }
.ct { font-family: Lato, sans-serif; font-size: 14px; fill: #6f6f6f; }
.cy { font-family: Lato, sans-serif; font-size: 9.500px; fill: #777; }
.cx { font-family: Lato, sans-serif; font-size: 8.500px; fill: #666; letter-spacing: .1px; }

.ghost { position: absolute; left: 17px; top: 356px; }
</style>
